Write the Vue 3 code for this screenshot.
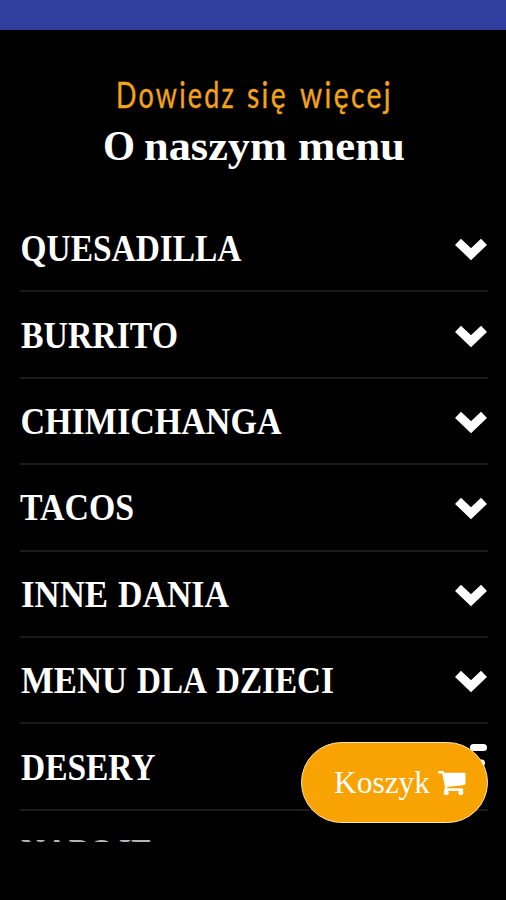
<script setup>
const eyebrow = [
  { text: 'Dowiedz', x: 116, w: 120 },
  { text: 'się', x: 247, w: 41 },
  { text: 'więcej', x: 300, w: 93 },
]

const heading = [
  { text: 'O', x: 103, w: 32 },
  { text: 'naszym', x: 144, w: 143 },
  { text: 'menu', x: 298, w: 107 },
]

const categories = [
  { id: 1, words: [{ text: 'QUESADILLA', x: 0.5, w: 221 }] },
  { id: 2, words: [{ text: 'BURRITO', x: 1, w: 157 }] },
  { id: 3, words: [{ text: 'CHIMICHANGA', x: 0.5, w: 261 }] },
  { id: 4, words: [{ text: 'TACOS', x: 0, w: 114 }] },
  { id: 5, words: [{ text: 'INNE', x: 1, w: 87 }, { text: 'DANIA', x: 98, w: 111 }] },
  { id: 6, words: [{ text: 'MENU', x: 1, w: 106 }, { text: 'DLA', x: 117, w: 70 }, { text: 'DZIECI', x: 196, w: 118 }] },
  { id: 7, words: [{ text: 'DESERY', x: 1, w: 134.5 }], opened: true },
  { id: 8, words: [{ text: 'NAPOJE', x: 1, w: 132 }], last: true },
]
</script>

<template>
  <div class="page">
    <div class="top-bar"></div>
    <main class="menu">
      <header class="menu-header">
        <svg class="eyebrow" width="506" height="50" viewBox="0 0 506 50">
          <text v-for="word in eyebrow" :key="word.text" :x="word.x" y="38" :textLength="word.w" lengthAdjust="spacingAndGlyphs">{{ word.text }}</text>
        </svg>
        <svg class="heading" width="506" height="56" viewBox="0 0 506 56">
          <text v-for="word in heading" :key="word.text" :x="word.x" y="39.5" :textLength="word.w" lengthAdjust="spacingAndGlyphs">{{ word.text }}</text>
        </svg>
      </header>
      <div v-for="item in categories" :key="item.id" :class="{ 'menu-row': true, 'last-row': item.last }">
        <svg class="row-title" width="340" height="50" viewBox="0 0 340 50">
          <text v-for="word in item.words" :key="word.text" :x="word.x" y="37.5" :textLength="word.w" lengthAdjust="spacingAndGlyphs">{{ word.text }}</text>
        </svg>
        <svg v-if="item.opened" class="row-icon" width="34" height="44" viewBox="0 0 34 44">
          <path d="M19.5 2.5H29.5M19 18H27.5" fill="none" stroke="#fff" stroke-width="7" stroke-linecap="round" />
        </svg>
        <svg v-else class="row-icon" width="34" height="44" viewBox="0 0 34 44">
          <path d="M4 15.8L17 28.2L30 15.8" fill="none" stroke="#fff" stroke-width="8.6" />
        </svg>
      </div>
    </main>
    <button class="cart-btn">
      <svg class="cart-label" width="97" height="44" viewBox="0 0 97 44">
        <text x="0" y="32" textLength="96" lengthAdjust="spacingAndGlyphs">Koszyk</text>
      </svg>
      <svg class="cart-icon" width="28" height="25" viewBox="0 0 28 25" fill="#fff">
        <path d="M0 1Q0 0 1 0H5Q6 0 6.3 1.8H26.5Q27.5 1.8 27.5 3V12.6Q27.5 13.8 26.3 14L9 16L9.4 17.3H24Q25.2 17.3 25.2 18.5V20H6.3V18.3L7 16L4.2 2.4H1Q0 2.4 0 1Z" />
        <circle cx="8.2" cy="21.8" r="2.5" />
        <circle cx="22.8" cy="21.8" r="2.5" />
      </svg>
    </button>
  </div>
</template>

<style>
body {
  margin: 0;
  background: #000;
}
</style>

<style scoped>
.page {
  width: 506px;
  height: 900px;
  background: #000;
  overflow: hidden;
}

.top-bar {
  height: 30px;
  background: #303f9f;
}

.menu {
  height: 812px;
  overflow: hidden;
}

.menu-header {
  height: 176px;
  padding-top: 40px;
  box-sizing: border-box;
}

.menu-header svg {
  display: block;
}

.eyebrow {
  font-family: Lato, sans-serif;
  font-size: 36px;
  letter-spacing: 3px;
  fill: #f2a31b;
  stroke: #f2a31b;
  stroke-width: 0.4;
}

.heading {
  font-family: "Liberation Serif", serif;
  font-size: 43px;
  font-weight: bold;
  fill: #fff;
}

.menu-row {
  display: flex;
  align-items: center;
  justify-content: space-between;
  height: 86.4px;
  margin: 0 18px 0 20px;
  box-sizing: border-box;
  border-bottom: 2px solid #1b1b1b;
}

.last-row .row-title {
  fill: #b4b4b4;
}

/* the last category peeks out above the bottom edge of the list */
.last-row {
  padding-bottom: 1px;
}

.row-title {
  font-family: "Liberation Serif", serif;
  font-size: 37px;
  font-weight: bold;
  fill: #fff;
}

.row-icon {
  overflow: visible;
}

.last-row .row-icon {
  overflow: hidden;
}

.cart-btn {
  position: absolute;
  left: 301px;
  top: 742px;
  display: flex;
  align-items: center;
  gap: 7px;
  width: 187px;
  height: 81px;
  padding: 0 0 0 32px;
  box-sizing: border-box;
  border: 1.5px solid #ffe5b0;
  border-radius: 41px;
  background: #f9a303;
}

.cart-label {
  font-family: "Liberation Serif", serif;
  font-size: 32px;
  fill: #fff;
}

.cart-icon {
  margin-top: 2px;
}
</style>
